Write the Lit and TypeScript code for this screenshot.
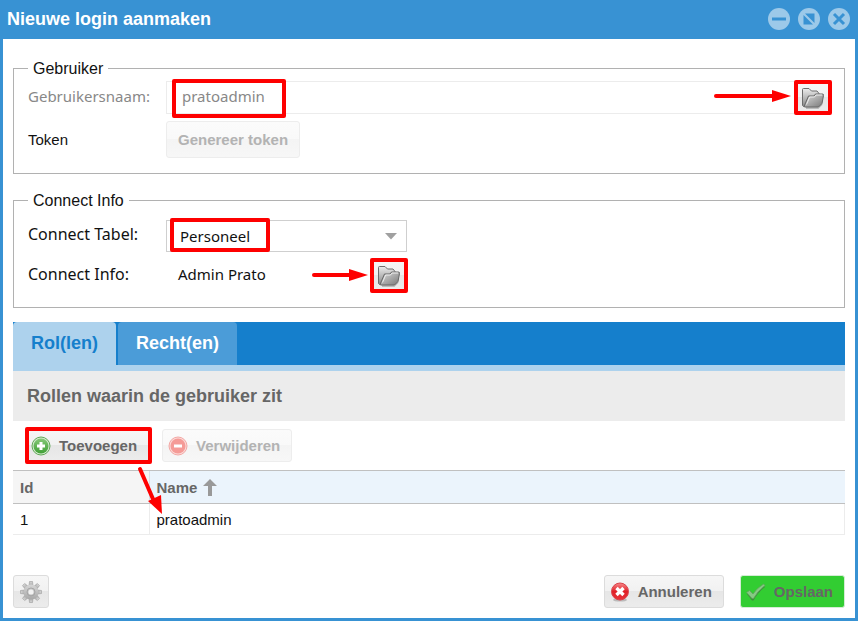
import { LitElement, html, svg, css } from "lit";
import { customElement, state } from "lit/decorators.js";

const folderIcon = html`<svg class="folder" width="24" height="24" viewBox="0 0 24 24" aria-hidden="true">
  <defs>
    <linearGradient id="fb" x1="0" y1="0" x2="0" y2="1"><stop offset="0" stop-color="#ececec"/><stop offset="1" stop-color="#888"/></linearGradient>
    <linearGradient id="ff" x1="0" y1="0" x2="1" y2="1"><stop offset="0" stop-color="#dedede"/><stop offset="1" stop-color="#777"/></linearGradient>
  </defs>
  <path d="M5 22H17L21 18" stroke="#bbb" stroke-width="2" fill="none"/>
  <path d="M1.500 19.500V3.500Q1.500 2.500 2.500 2.500H8L10.500 5H16L18 7.500V17L15 20.500H2.500Z" fill="url(#fb)" stroke="#6c6c6c"/>
  <path d="M3 20.500L7.500 10H13L14.500 8H21.500Q22.800 8 22.500 9.500L21 17.500L17.500 21H4Z" fill="url(#ff)" stroke="#666" stroke-linejoin="round"/>
  <path d="M5.500 18.500L8.700 11H13.500L15 9H21" stroke="#ededed" fill="none"/>
</svg>`;

const plusIcon = html`<svg width="20" height="20" viewBox="0 0 20 20" aria-hidden="true">
  <defs><linearGradient id="g" x1="0" y1="0" x2="0" y2="1"><stop offset="0" stop-color="#86c878"/><stop offset="1" stop-color="#3fa035"/></linearGradient></defs>
  <circle cx="10" cy="10" r="9" fill="#d4e8cf" stroke="#5fa956"/>
  <circle cx="10" cy="10" r="7.500" fill="url(#g)"/>
  <path d="M10 6V14M6 10H14" stroke="#fff" stroke-width="3"/>
</svg>`;

const minusIcon = html`<svg width="20" height="20" viewBox="0 0 20 20" aria-hidden="true">
  <circle cx="10" cy="10" r="9" fill="#fbd9d7" stroke="#f3a7a4"/>
  <circle cx="10" cy="10" r="7.500" fill="#f59b97"/>
  <path d="M6 10H14" stroke="#fff" stroke-width="3"/>
</svg>`;

const cancelIcon = html`<svg width="20" height="20" viewBox="0 0 20 20" aria-hidden="true">
  <defs><linearGradient id="r" x1="0" y1="0" x2="0" y2="1"><stop offset="0" stop-color="#f8888a"/><stop offset=".5" stop-color="#e02027"/><stop offset="1" stop-color="#e8343a"/></linearGradient></defs>
  <ellipse cx="10" cy="18" rx="7" ry="1.600" fill="#bbb"/>
  <circle cx="10" cy="9.500" r="8.500" fill="url(#r)" stroke="#d9444c"/>
  <path d="M6.500 6L13.500 13M13.500 6L6.500 13" stroke="#fff" stroke-width="3.400"/>
</svg>`;

const checkIcon = html`<svg width="20" height="20" viewBox="0 0 20 20" aria-hidden="true">
  <path d="M1 12L3.500 10L7 13.500Q11 7.500 17.500 3.500L19 5Q12 10 7.500 18.500H6Z" fill="#3f8a3c"/>
  <path d="M.500 10.500L3.500 8.500L7 12Q11 6 17.500 2L19 3.500Q12 8.500 7.500 16.500H6Z" fill="#86c983" stroke="#5fa45c" stroke-width=".8" stroke-linejoin="round"/>
</svg>`;

const gearIcon = html`<svg width="22" height="22" viewBox="0 0 22 22" aria-hidden="true">
  <defs><linearGradient id="gr" x1="0" y1="0" x2="0" y2="1"><stop offset="0" stop-color="#d6d6d6"/><stop offset="1" stop-color="#a8a8a8"/></linearGradient></defs>
  <g fill="url(#gr)" stroke="#999" stroke-width=".6">
    ${[0, 45, 90, 135, 180, 225, 270, 315].map(
      (a) => svg`<path transform="rotate(${a} 11 11)" d="M9 5L9.500 .500H12.500L13 5Z"/>`
    )}
  </g>
  <circle cx="11" cy="11" r="7.500" fill="url(#gr)"/>
  <circle cx="11" cy="11" r="4" fill="none" stroke="#a6a6a6"/>
  <circle cx="11" cy="11" r="2.600" fill="#f2f2f2"/>
</svg>`;

@customElement("app-root")
class AppRoot extends LitElement {
  @state() tab = 0;

  static styles = css`
    :host {
      display: block;
      font-family: "Liberation Sans", Arial, sans-serif;
      font-size: 15px;
      color: #111;
    }
    * { box-sizing: border-box; }
    button, input, select { font: inherit; margin: 0; }
    svg { display: block; flex: none; }
    .window {
      display: flex;
      flex-direction: column;
      min-height: 100vh;
      border: 3px solid #3892d3;
      border-top: 0;
      background: #fff;
    }
    .titlebar {
      display: flex;
      align-items: center;
      justify-content: space-between;
      height: 39px;
      padding: 0 5px 1px 4px;
      background: #3892d3;
    }
    .titlebar h1 { margin: 0; font-size: 18px; line-height: 22px; color: #fff; }
    .tools { display: flex; gap: 8px; }
    .tool { padding: 0; border: 0; background: none; }
    .body { display: flex; flex-direction: column; flex: 1; padding: 20px 10px 10px; }
    fieldset { margin: 0 0 17px; padding: 0 13px 15px 14px; border: 1px solid #b1b1b1; min-width: 0; }
    fieldset.second { margin-bottom: 14px; }
    legend { margin: 0; padding: 0 5px; font-size: 16px; line-height: 19px; }
    .row { display: flex; margin-top: 7px; align-items: center; }
    .row.tight { margin-top: 3px; }
    .row.loose { margin-top: 10px; }
    .label { flex: none; width: 138px; padding-bottom: 4px; font-family: "Noto Sans", sans-serif; font-size: 16px; line-height: 20px; }
    .label.plain { padding: 0; font-family: inherit; font-size: 15px; }
    .label.dim { color: #888; font-size: 15px; }
    .grow { position: relative; display: flex; flex: 1; }
    .text {
      flex: 1; width: 100%; height: 33px; padding: 0 15px 3px;
      border: 1px solid #ececec; background: #fff; color: #888;
      font-family: "Noto Sans", sans-serif;
    }
    .spot { position: relative; display: flex; }
    .mark { position: absolute; border: 4px solid #fe0000; border-radius: 2px; pointer-events: none; }
    .mark.user { left: 6px; top: -2px; width: 114px; height: 39px; }
    .mark.tabel { left: 4px; top: -2px; width: 100px; height: 34px; }
    .mark.icon { inset: -1px; }
    .mark.add { inset: -2px -3px -2px 0; }
    .arrow { position: absolute; pointer-events: none; }
    .arrow.a { right: 4px; top: 8px; }
    .arrow.b { right: 39px; top: 9px; }
    .arrow.c { left: 112px; top: 35px; z-index: 1; }
    .btn {
      display: flex; align-items: center; justify-content: center; gap: 8px;
      height: 33px; padding: 0 11px 0 5px;
      border: 1px solid #dcdcdc; border-radius: 3px;
      background: linear-gradient(#f6f6f6, #f1f1f1 50%, #e6e6e6 50%, #ececec);
      color: #666; font-weight: bold;
    }
    .btn.square { width: 36px; padding: 0; }
    .btn.token { height: 37px; padding: 0 11px; }
    .btn.off { border-color: #ededed; background: linear-gradient(#fbfbfb, #f9f9f9 50%, #f4f4f4 50%, #f7f7f7); color: #b3b3b3; }
    .btn.save { background: #32cd32; border-color: #d5ecd5; }
    .combo { position: relative; width: 241px; }
    .combo select {
      display: block; width: 100%; height: 32px; padding: 0 13px 1px; appearance: none;
      border: 1px solid #cfcfcf; border-radius: 0; background: #fff; color: #111;
      font-family: "Noto Sans", sans-serif;
    }
    .combo .caret { position: absolute; right: 10px; top: 13px; pointer-events: none; }
    .value { width: 205px; padding: 0 0 4px 12px; font-family: "Noto Sans", sans-serif; }
    .tabs { display: flex; gap: 2px; height: 43px; background: #157fcc; }
    .tab {
      padding: 0 18px; border: 0; border-radius: 4px 4px 0 0;
      background: #4b9cd8; color: #fff; font-size: 18px; font-weight: bold;
    }
    .tab.active { background: #add2ed; color: #157fcc; }
    .strip { height: 6px; background: #add2ed; }
    h2 { margin: 0; padding: 0 14px; font-size: 18px; line-height: 50px; background: #ececec; color: #666; }
    .toolbar { display: flex; gap: 13px; padding: 8px 12px 8px; }
    table { width: 100%; border-collapse: collapse; table-layout: fixed; text-align: left; }
    th, td { padding: 0 7px; }
    th { height: 33px; border: solid #c0c0c0; border-width: 1px 0; background: #f5f5f5; color: #666; }
    th.sorted { background: #ebf4fc; border-left: 1px solid #d8dfe6; }
    td { height: 31px; border-bottom: 1px solid #ececec; }
    td + td { border-left: 1px solid #ececec; border-right: 1px solid #ececec; }
    .idcol { width: 136px; }
    .sort { display: flex; align-items: center; gap: 6px; }
    .footer { display: flex; align-items: center; margin-top: auto; gap: 16px; }
    .footer .first { margin-right: auto; }
  `;

  render() {
    return html`
      <main class="window">
        <header class="titlebar">
          <h1>Nieuwe login aanmaken</h1>
          <div class="tools">
            <button class="tool" aria-label="Minimaliseren">
              <svg width="22" height="22" viewBox="0 0 22 22"><circle cx="11" cy="11" r="11" fill="#9cc9e9"/><path d="M4 11H18" stroke="#3892d3" stroke-width="3"/></svg>
            </button>
            <button class="tool" aria-label="Maximaliseren">
              <svg width="22" height="22" viewBox="0 0 22 22"><circle cx="11" cy="11" r="11" fill="#9cc9e9"/><path d="M7 5.500H16.500V15Z M5.500 7V16.500H15Z" fill="#3892d3"/></svg>
            </button>
            <button class="tool" aria-label="Sluiten">
              <svg width="22" height="22" viewBox="0 0 22 22"><circle cx="11" cy="11" r="11" fill="#9cc9e9"/><path d="M6 6L16 16M16 6L6 16" stroke="#3892d3" stroke-width="3"/></svg>
            </button>
          </div>
        </header>
        <div class="body">
          <fieldset>
            <legend>Gebruiker</legend>
            <div class="row tight">
              <label class="label dim" for="user">Gebruikersnaam:</label>
              <div class="grow">
                <input class="text" id="user" value="pratoadmin" readonly />
                <span class="mark user"></span>
                <svg class="arrow a" width="77" height="14" viewBox="0 0 77 14"><path d="M2 7H60" stroke="#fe0000" stroke-width="4" stroke-linecap="round"/><path d="M58 1L77 7L58 13Z" fill="#fe0000"/></svg>
              </div>
              <span class="spot">
                <button class="btn square" aria-label="Gebruiker kiezen">${folderIcon}</button>
                <span class="mark icon"></span>
              </span>
            </div>
            <div class="row">
              <span class="label plain">Token</span>
              <button class="btn token off" disabled>Genereer token</button>
            </div>
          </fieldset>

          <fieldset class="second">
            <legend>Connect Info</legend>
            <div class="row loose">
              <label class="label" for="tabel">Connect Tabel:</label>
              <div class="combo">
                <select id="tabel"><option>Personeel</option></select>
                <svg class="caret" width="12" height="7" viewBox="0 0 12 7"><path d="M0 0H12L6 6.500Z" fill="#a0a0a0"/></svg>
                <span class="mark tabel"></span>
              </div>
            </div>
            <div class="row">
              <span class="label">Connect Info:</span>
              <span class="value">Admin Prato</span>
              <span class="spot">
                <svg class="arrow b" width="56" height="14" viewBox="0 0 56 14"><path d="M2 7H40" stroke="#fe0000" stroke-width="4" stroke-linecap="round"/><path d="M37 1L56 7L37 13Z" fill="#fe0000"/></svg>
                <button class="btn square" aria-label="Persoon kiezen">${folderIcon}</button>
                <span class="mark icon"></span>
              </span>
            </div>
          </fieldset>

          <div class="tabs" role="tablist">
            ${["Rol(len)", "Recht(en)"].map(
              (name, i) => html`<button role="tab" class="tab ${this.tab === i ? "active" : ""}"
                aria-selected=${this.tab === i} @click=${() => (this.tab = i)}>${name}</button>`
            )}
          </div>
          <div class="strip"></div>
          <h2>Rollen waarin de gebruiker zit</h2>
          <div class="toolbar">
            <span class="spot">
              <button class="btn">${plusIcon}Toevoegen</button>
              <span class="mark add"></span>
              <svg class="arrow c" width="28" height="52" viewBox="0 0 28 52"><path d="M3 5L16 35" stroke="#fe0000" stroke-width="4" stroke-linecap="round"/><path d="M11 37L24 31L25 50Z" fill="#fe0000"/></svg>
            </span>
            <button class="btn off" disabled>${minusIcon}Verwijderen</button>
          </div>
          <table>
            <thead>
              <tr>
                <th class="idcol">Id</th>
                <th class="sorted"><span class="sort">Name
                  <svg width="14" height="17" viewBox="0 0 14 17"><path d="M7 0L14 7H9V17H5V7H0Z" fill="#999"/></svg></span></th>
              </tr>
            </thead>
            <tbody>
              <tr><td>1</td><td>pratoadmin</td></tr>
            </tbody>
          </table>
          <footer class="footer">
            <button class="btn square first" aria-label="Instellingen">${gearIcon}</button>
            <button class="btn">${cancelIcon}Annuleren</button>
            <button class="btn save">${checkIcon}Opslaan</button>
          </footer>
        </div>
      </main>
    `;
  }
}
